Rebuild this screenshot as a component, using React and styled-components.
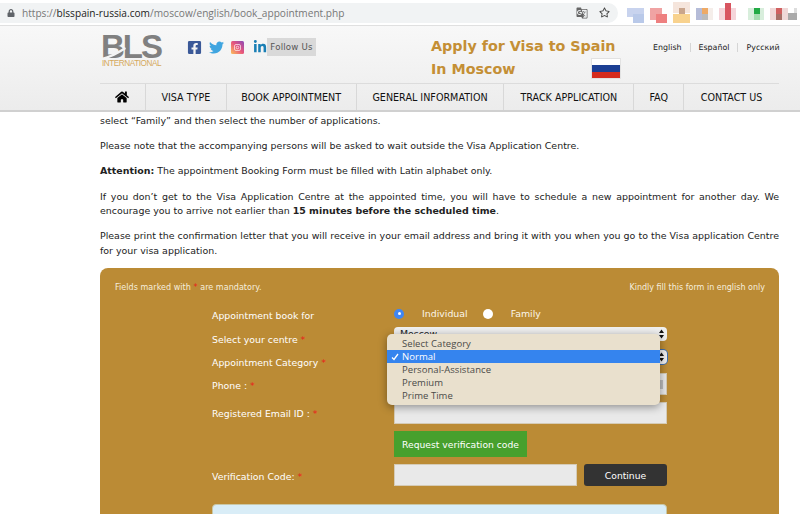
import React from "react";
import styled, { createGlobalStyle } from "styled-components";
import { FaFacebookSquare, FaTwitter, FaLinkedinIn, FaHome, FaLock, FaRegStar } from "react-icons/fa";
import { MdGTranslate } from "react-icons/md";

const GlobalStyle = createGlobalStyle`
  html, body {
    margin: 0;
    padding: 0;
    background: #fff;
  }
  * {
    box-sizing: border-box;
  }
`;

const Page = styled.div`
  width: 800px;
  height: 514px;
  overflow: hidden;
  font-family: "DejaVu Sans", Verdana, sans-serif;
  color: #222;
`;

const BrowserBar = styled.div`
  height: 26px;
  display: flex;
  align-items: center;
  background: #fff;
  border-bottom: 1px solid #e0e0e0;
  position: relative;
`;

const UrlPill = styled.div`
  width: 618px;
  height: 20px;
  border-radius: 0 10px 10px 0;
  background: #f1f3f4;
  display: flex;
  align-items: center;
  padding: 0 8px 0 7px;
  font-family: "Open Sans", sans-serif;
  font-size: 10.15px;
  color: #777;
  svg {
    flex: none;
  }
`;

const Url = styled.span`
  margin-left: 7px;
  flex: 1;
  b {
    font-weight: 400;
    color: #222;
  }
  i {
    font-style: normal;
  }
`;

const PillIcons = styled.div`
  display: flex;
  align-items: center;
  gap: 11px;
  color: #666;
`;

const Extensions = styled.svg`
  width: 182px;
  height: 26px;
  flex: none;
`;

const Header = styled.header`
  height: 86px;
  background: linear-gradient(#f8f8f8, #ececec);
  border-bottom: 2px solid #d0d0d0;
  padding: 0 21px 0 100px;
  display: flex;
  flex-direction: column;
`;

const TopRow = styled.div`
  height: 57px;
  display: grid;
  grid-template-columns: 87px 244px 222px 1fr;
`;

const Logo = styled.div`
  position: relative;
  padding: 7px 0 0 1px;
  line-height: 1;
`;

const LogoMark = styled.div`
  font-family: "Liberation Sans", Arial, sans-serif;
  font-weight: 700;
  font-size: 33px;
  letter-spacing: -2px;
  line-height: 27px;
  color: #808080;
`;

const LogoSub = styled.div`
  font-family: "Liberation Sans", Arial, sans-serif;
  font-size: 8.2px;
  letter-spacing: -0.45px;
  line-height: 8px;
  padding-left: 1px;
  color: #d5a95c;
`;

const Swoosh = styled.svg`
  position: absolute;
  left: 1px;
  top: 20px;
`;

const Social = styled.div`
  display: flex;
  align-items: center;
  height: 18px;
  margin-top: 12px;
  svg {
    flex: none;
  }
`;

const SocialLink = styled.a`
  display: flex;
  width: ${(p) => p.$width}px;
  color: ${(p) => p.$color};
`;

const FollowUs = styled.span`
  width: 49px;
  height: 18px;
  background: #d9d9d9;
  color: #555;
  font-size: 8.6px;
  text-align: center;
  line-height: 18px;
  letter-spacing: 0.2px;
`;

const TitleBlock = styled.div`
  padding-top: 9px;
  width: 190px;
  font-family: "DejaVu Sans", Verdana, sans-serif;
  font-weight: 700;
  font-size: 14.3px;
  line-height: 23px;
  color: #c48f35;
`;

const TitleLine = styled.div`
  display: flex;
  justify-content: space-between;
  white-space: nowrap;
  height: 23px;
`;

const Flag = styled.div`
  width: 30px;
  height: 21px;
  border: 1px solid #e2e2e2;
  background: linear-gradient(#fff 33%, #1c3f94 33% 66%, #d52b1e 66%);
`;

const LangList = styled.div`
  display: flex;
  align-items: center;
  height: 14px;
  margin-top: 14px;
  font-size: 7.9px;
  color: #222;
`;

const Lang = styled.a`
  padding: 0 8px;
  white-space: nowrap;
  border-left: ${(p) => (p.$first ? "none" : "1px solid #d5d5d5")};
  &:first-child {
    padding-left: 0;
  }
`;

const Nav = styled.nav`
  display: flex;
  height: 27px;
  border-top: 1px solid #dcdcdc;
`;

const NavItem = styled.a`
  width: ${(p) => p.$width}px;
  display: flex;
  align-items: center;
  justify-content: center;
  font-size: 9.6px;
  color: #111;
  white-space: nowrap;
  border-left: ${(p) => (p.$first ? "none" : "1px solid #d8d8d8")};
`;

const Content = styled.main`
  padding: 2px 21px 0 100px;
`;

const Para = styled.p`
  margin: 0 0 10.6px;
  font-size: 9.45px;
  line-height: 14.6px;
  text-align: ${(p) => (p.$justify ? "justify" : "left")};
`;

const FormPanel = styled.section`
  margin-top: -1px;
  background: #bb8b35;
  border-radius: 8px;
  padding: 14px 14px 0;
  color: #fff;
  height: 300px;
`;

const NoteRow = styled.div`
  display: flex;
  justify-content: space-between;
  font-size: 8px;
  line-height: 11px;
  color: #f6eedd;
  margin-bottom: 13px;
`;

const NoteLeft = styled.span`
  padding-left: 1px;
  letter-spacing: 0.05px;
`;

const Star = styled.span`
  color: #e8201a;
`;

const FormGrid = styled.div`
  margin-left: 98px;
  width: 455px;
`;

const Row = styled.div`
  display: grid;
  grid-template-columns: 182px 273px;
  margin-top: ${(p) => p.$gap}px;
`;

const Label = styled.label`
  font-size: 9.35px;
  line-height: 14px;
  padding-top: ${(p) => p.$offset}px;
  height: 0;
  white-space: nowrap;
`;

const Radios = styled.div`
  display: flex;
  align-items: center;
  height: 15px;
  font-size: 9.4px;
  color: #fbf6ea;
`;

const Radio = styled.span`
  width: 10px;
  height: 10px;
  border-radius: 50%;
  margin-right: ${(p) => p.$gap}px;
  background: ${(p) => (p.$checked ? "#3f86f2" : "#fff")};
  display: flex;
  align-items: center;
  justify-content: center;
  &::after {
    content: "";
    width: 3px;
    height: 3px;
    border-radius: 50%;
    background: ${(p) => (p.$checked ? "#fff" : "transparent")};
  }
`;

const RadioText = styled.span`
  margin-right: ${(p) => p.$gap}px;
`;

const SelectBox = styled.div`
  position: relative;
  height: 14px;
  background: #efefef;
  border-radius: 4px;
  font-size: 9.4px;
  line-height: 13px;
  color: #222;
  padding-left: 6px;
  box-shadow: ${(p) => (p.$focus ? "0 0 0 1px #3e6fb0" : "none")};
  svg {
    position: absolute;
    right: 2px;
    top: 2px;
  }
`;

const SelectMenu = styled.ul`
  position: absolute;
  left: -7px;
  top: -16px;
  width: 273px;
  height: 71px;
  margin: 0;
  padding: 3px 0;
  list-style: none;
  background: #e9e0cd;
  border-radius: 5px;
  box-shadow: 0 2px 8px rgba(0, 0, 0, 0.4);
  font-family: "Open Sans", sans-serif;
  font-size: 9.5px;
  z-index: 2;
`;

const MenuOption = styled.li`
  height: 13px;
  line-height: 13px;
  padding-left: 15px;
  position: relative;
  color: ${(p) => (p.$selected ? "#fff" : "#4a4a48")};
  background: ${(p) => (p.$selected ? "#3584ee" : "transparent")};
  letter-spacing: 0.05px;
  svg {
    position: absolute;
    left: 4px;
    top: 3px;
  }
`;

const TextInput = styled.div`
  position: relative;
  height: 22px;
  width: ${(p) => p.$width || "100%"};
  background: #e9e9e9;
  border: 1px solid #d5cbb6;
  &::after {
    content: "";
    display: ${(p) => (p.$contact ? "block" : "none")};
    position: absolute;
    right: 3px;
    top: 6px;
    width: 4px;
    height: 9px;
    background: #bdbdbd;
  }
`;

const VerifyRow = styled.div`
  display: flex;
  justify-content: space-between;
`;

const GreenButton = styled.button`
  width: 133px;
  height: 26px;
  padding: 0;
  border: none;
  background: #47a02d;
  color: #fff;
  font-family: inherit;
  font-size: 9.2px;
`;

const DarkButton = styled.button`
  width: 83px;
  height: 22px;
  padding: 0;
  border: none;
  border-radius: 3px;
  background: #333;
  color: #fff;
  font-family: inherit;
  font-size: 9.2px;
`;

const InfoBox = styled.div`
  margin-top: 18px;
  width: 455px;
  height: 60px;
  background: #d9edf7;
  border: 1px solid #c9c7a6;
  border-radius: 4px;
`;

const BLOBS = [
  [2, 8, 17, 9, "#c8d3ee"], [8, 14, 11, 9, "#b9c9e9"],
  [25, 8, 12, 12, "#f0a3a3"], [31, 14, 11, 9, "#ee8080"],
  [48, 2, 17, 11, "#f5e5dc"], [54, 8, 6, 6, "#c9a58c"], [48, 14, 17, 9, "#f8d28e"],
  [71, 8, 6, 12, "#b5bcd8"], [77, 8, 6, 6, "#eeaa66"], [77, 14, 6, 6, "#bbbbbb"], [83, 8, 5, 12, "#f5eeea"],
  [94, 8, 17, 12, "#f5d5da"], [100, 3, 6, 17, "#d85560"],
  [123, 8, 16, 12, "#d8eedc"], [129, 8, 6, 6, "#22aa44"], [129, 14, 6, 6, "#a5dcb0"],
  [145, 8, 18, 12, "#f0d8d8"], [151, 8, 6, 6, "#d06060"], [151, 14, 6, 6, "#a87068"],
  [163, 13, 9, 7, "#aaaaaa"], [169, 8, 3, 5, "#dddddd"],
];

const UpDownArrows = () => (
  <svg width="7" height="10" viewBox="0 0 7 10">
    <path d="M3.5 0.5 L6 4 H1 Z M3.5 9.5 L6 6 H1 Z" fill="#111" />
  </svg>
);

const InstagramIcon = () => (
  <svg width="13" height="13" viewBox="0 0 13 13">
    <defs>
      <linearGradient id="ig" x1="0" y1="1" x2="1" y2="0">
        <stop offset="0" stopColor="#fbc15a" />
        <stop offset="0.5" stopColor="#e8567c" />
        <stop offset="1" stopColor="#8a49b8" />
      </linearGradient>
    </defs>
    <rect width="13" height="13" rx="1.5" fill="url(#ig)" />
    <rect x="3.5" y="3.5" width="6" height="6" rx="1.5" fill="none" stroke="#fff" strokeOpacity=".65" />
    <circle cx="6.5" cy="6.5" r="1.3" fill="none" stroke="#fff" strokeOpacity=".65" />
  </svg>
);

const NAV_ITEMS = [
  { label: "VISA TYPE", width: 81 },
  { label: "BOOK APPOINTMENT", width: 130 },
  { label: "GENERAL INFORMATION", width: 148 },
  { label: "TRACK APPLICATION", width: 130 },
  { label: "FAQ", width: 50 },
  { label: "CONTACT US", width: 96 },
];

const MENU_OPTIONS = ["Select Category", "Normal", "Personal-Assistance", "Premium", "Prime Time"];

const App = () => {
  return (
    <Page>
      <GlobalStyle />
      <BrowserBar>
        <UrlPill>
          <FaLock size={8} color="#5f6368" />
          <Url>
            <i>https://</i><b>blsspain-russia.com</b>/moscow/english/book_appointment.php
          </Url>
          <PillIcons>
            <MdGTranslate size={12} />
            <FaRegStar size={11} color="#444" />
          </PillIcons>
        </UrlPill>
        <Extensions viewBox="0 0 182 26">
          <defs>
            <filter id="soft">
              <feGaussianBlur stdDeviation="0.6" />
            </filter>
          </defs>
          <g filter="url(#soft)">
            {BLOBS.map(([x, y, w, h, fill], i) => (
              <rect key={i} x={x + 7} y={y} width={w} height={h} fill={fill} />
            ))}
          </g>
        </Extensions>
      </BrowserBar>

      <Header>
        <TopRow>
          <Logo>
            <LogoMark>BLS</LogoMark>
            <LogoSub>INTERNATIONAL</LogoSub>
            <Swoosh width="40" height="14" viewBox="0 0 40 14">
              <path d="M0 12 C8 10 16 6 24 1 L25 3 C18 8 9 12 1 14 Z" fill="#f4f4f4" />
            </Swoosh>
          </Logo>
          <Social>
            <SocialLink $width={22} $color="#3b5998"><FaFacebookSquare size={15} /></SocialLink>
            <SocialLink $width={22} $color="#3fa5e0"><FaTwitter size={15} /></SocialLink>
            <SocialLink $width={22}><InstagramIcon /></SocialLink>
            <SocialLink $width={14} $color="#1a7fb5"><FaLinkedinIn size={14} /></SocialLink>
            <FollowUs>Follow Us</FollowUs>
          </Social>
          <TitleBlock>
            <TitleLine>Apply for Visa to Spain</TitleLine>
            <TitleLine>
              In Moscow
              <Flag />
            </TitleLine>
          </TitleBlock>
          <LangList>
            <Lang $first>English</Lang>
            <Lang>Español</Lang>
            <Lang>Русский</Lang>
          </LangList>
        </TopRow>
        <Nav>
          <NavItem $first $width={45}><FaHome size={14} color="#000" /></NavItem>
          {NAV_ITEMS.map((item) => (
            <NavItem key={item.label} $width={item.width}>{item.label}</NavItem>
          ))}
        </Nav>
      </Header>

      <Content>
        <Para>select “Family” and then select the number of applications.</Para>
        <Para>Please note that the accompanying persons will be asked to wait outside the Visa Application Centre.</Para>
        <Para><b>Attention:</b> The appointment Booking Form must be filled with Latin alphabet only.</Para>
        <Para $justify>
          If you don’t get to the Visa Application Centre at the appointed time, you will have to schedule a new
          appointment for another day. We encourage you to arrive not earlier than <b>15 minutes before the scheduled time</b>.
        </Para>
        <Para $justify>
          Please print the confirmation letter that you will receive in your email address and bring it with you when
          you go to the Visa application Centre for your visa application.
        </Para>

        <FormPanel>
          <NoteRow>
            <NoteLeft>Fields marked with <Star>*</Star> are mandatory.</NoteLeft>
            <span>Kindly fill this form in english only</span>
          </NoteRow>
          <FormGrid>
            <Row $gap={0}>
              <Label $offset={3}>Appointment book for</Label>
              <Radios>
                <Radio $checked $gap={18} />
                <RadioText $gap={15}>Individual</RadioText>
                <Radio $gap={18} />
                <RadioText>Family</RadioText>
              </Radios>
            </Row>
            <Row $gap={6}>
              <Label $offset={6}>Select your centre <Star>*</Star></Label>
              <SelectBox>Moscow<UpDownArrows /></SelectBox>
            </Row>
            <Row $gap={9}>
              <Label $offset={6}>Appointment Category <Star>*</Star></Label>
              <SelectBox $focus>
                <UpDownArrows />
                <SelectMenu>
                  {MENU_OPTIONS.map((option) => (
                    <MenuOption key={option} $selected={option === "Normal"}>
                      {option === "Normal" && (
                        <svg width="8" height="8" viewBox="0 0 8 8">
                          <path d="M1 4.5 L3 6.5 L7 1" fill="none" stroke="#fff" strokeWidth="1.3" />
                        </svg>
                      )}
                      {option}
                    </MenuOption>
                  ))}
                </SelectMenu>
              </SelectBox>
            </Row>
            <Row $gap={9}>
              <Label $offset={6}>Phone : <Star>*</Star></Label>
              <TextInput $contact />
            </Row>
            <Row $gap={7}>
              <Label $offset={5}>Registered Email ID : <Star>*</Star></Label>
              <TextInput />
            </Row>
            <Row $gap={7}>
              <span />
              <div><GreenButton>Request verification code</GreenButton></div>
            </Row>
            <Row $gap={7}>
              <Label $offset={6}>Verification Code: <Star>*</Star></Label>
              <VerifyRow>
                <TextInput $width="183px" />
                <DarkButton>Continue</DarkButton>
              </VerifyRow>
            </Row>
            <InfoBox />
          </FormGrid>
        </FormPanel>
      </Content>
    </Page>
  );
};

export default App;
